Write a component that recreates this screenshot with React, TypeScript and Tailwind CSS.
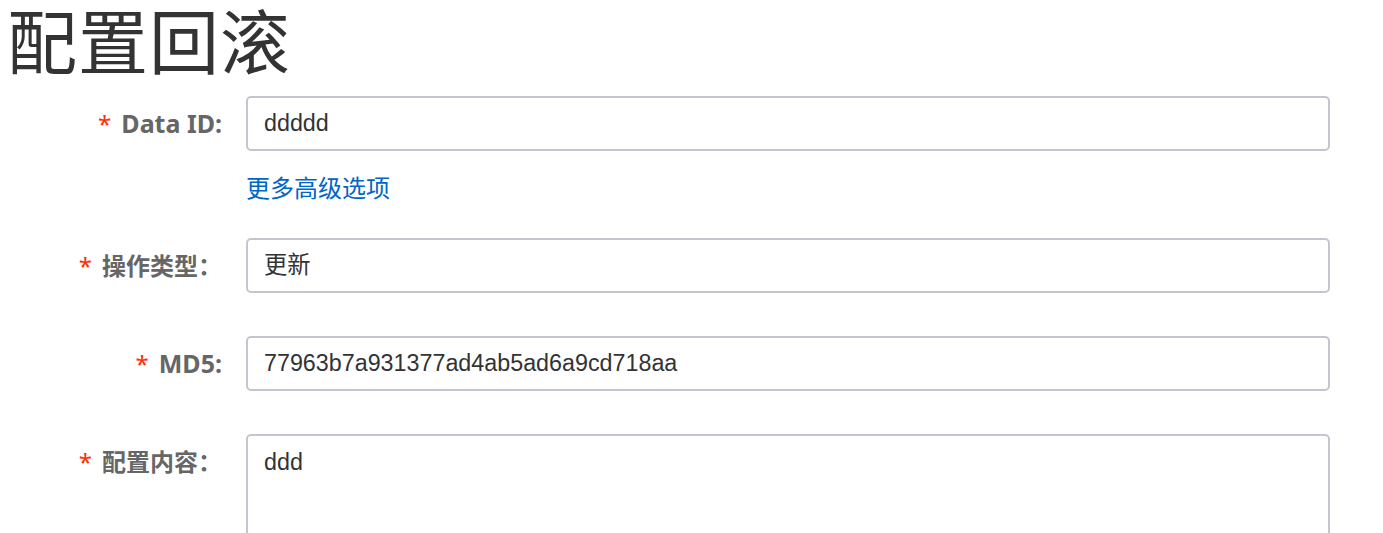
import React from 'react';

const sans = '"Liberation Sans", "Noto Sans CJK SC", sans-serif';
const label = '"Noto Sans", "Noto Sans CJK SC", sans-serif';

function Label({ text, latin }: { text: string; latin?: boolean }) {
  return (
    <div className="flex h-[55px] items-center justify-end pr-6" style={{ fontFamily: label }}>
      <span className="mr-[10px] text-[24px] text-[#ff3000]">*</span>
      <span className={`${latin ? 'text-[25px]' : 'text-[24px]'} font-bold text-[#666666]`}>{text}</span>
    </div>
  );
}

function Field({ text, value, latin }: { text: string; value: string; latin?: boolean }) {
  return (
    <div className="grid grid-cols-[246px_1084px]">
      <Label text={text} latin={latin} />
      <div className="flex h-[55px] items-center rounded-[5px] border-2 border-[#c4c6cf] bg-white pl-4 text-[23.3px] text-[#333333]">
        {value}
      </div>
    </div>
  );
}

export default function App() {
  return (
    <div className="min-h-[533px] bg-white" style={{ fontFamily: sans }}>
      <h1
        className="pl-[7px] text-[70px] leading-[78px] tracking-[1px] text-[#333333]"
        style={{ fontFamily: '"Noto Sans CJK SC", sans-serif' }}
      >
        配置回滚
      </h1>

      <div className="mt-[18px] flex flex-col">
        <Field text="Data ID:" value="ddddd" latin />

        <div className="mt-[26px] grid grid-cols-[246px_1084px]">
          <div />
          <a className="h-[24px] cursor-pointer text-[24px] leading-[24px] text-[#0064c8]">更多高级选项</a>
        </div>

        <div className="mt-[37px] flex flex-col gap-[43px]">
          <Field text="操作类型：" value="更新" />
          <Field text="MD5:" value="77963b7a931377ad4ab5ad6a9cd718aa" latin />

          <div className="grid grid-cols-[246px_1084px]">
            <Label text="配置内容：" />
            <div className="h-[160px] rounded-[5px] border-2 border-[#c4c6cf] bg-white pl-4 pt-[12px] text-[23.3px] leading-[28px] text-[#333333]">
              ddd
            </div>
          </div>
        </div>
      </div>
    </div>
  );
}
